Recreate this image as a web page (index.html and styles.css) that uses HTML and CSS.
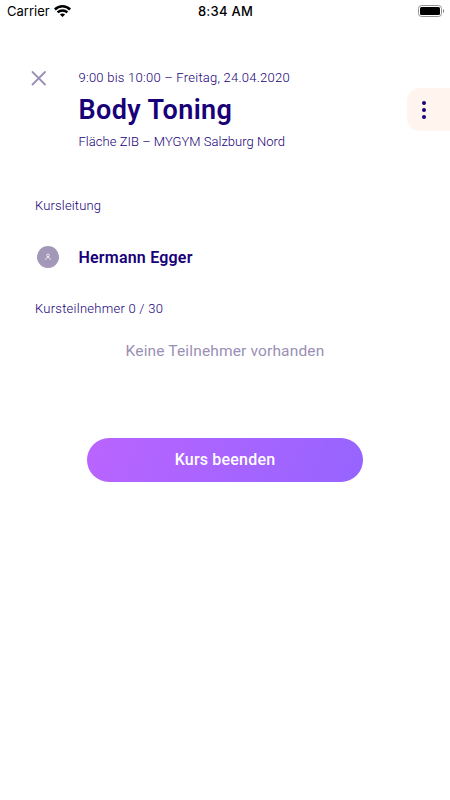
FILE: index.html
```
<!DOCTYPE html>
<html lang="de">
<head>
<meta charset="utf-8">
<title>Body Toning</title>
<link rel="stylesheet" href="styles.css">
</head>
<body>
<header class="status">
  <div class="status-left">
    <span class="carrier">Carrier</span>
    <svg class="wifi" width="17" height="12" viewBox="0 0 17 12" fill="none" stroke="#000" stroke-width="2.5"><path d="M.9 4.5C5.1.3 11.9.3 16.1 4.5"/><path d="M3.6 7.4c2.8-2.6 7-2.6 9.8 0"/><path d="M8.5 12 5.9 9.4c1.4-1.3 3.8-1.3 5.2 0z" fill="#000" stroke="none"/></svg>
  </div>
  <span class="clock">8:34 AM</span>
  <svg class="battery" width="27" height="12" viewBox="0 0 27 12"><rect x=".5" y=".5" width="23" height="11" rx="3" fill="none" stroke="#939393"/><rect x="2" y="2" width="20" height="8" rx="1.5"/><path d="M25 4v4c1.6-.6 1.6-3.4 0-4z" fill="#888"/></svg>
</header>
<main>
  <section class="course">
    <svg class="close" width="16" height="16" viewBox="0 0 16 16" fill="none" stroke="#9b8fb5" stroke-width="1.8" stroke-linecap="round"><path d="M1.5 2l12.5 12.5M14 2L1.5 14.5"/></svg>
    <div class="course-info">
      <p class="time">9:00 bis 10:00 – Freitag, 24.04.2020</p>
      <h1>Body Toning</h1>
      <p class="place">Fläche ZIB – MYGYM Salzburg Nord</p>
    </div>
    <div class="more"><i></i><i></i><i></i></div>
  </section>
  <h2 class="lead">Kursleitung</h2>
  <div class="trainer">
    <span class="avatar"><svg width="8" height="8" viewBox="0 0 8 8" fill="none" stroke="#fff" stroke-width=".8"><circle cx="4" cy="2.4" r="1.3"/><path d="M1.6 6.8c.2-3.1 4.6-3.1 4.8 0"/></svg></span>
    <span class="name">Hermann Egger</span>
  </div>
  <h2 class="count">Kursteilnehmer 0 / 30</h2>
  <p class="empty">Keine Teilnehmer vorhanden</p>
  <button class="finish">Kurs beenden</button>
</main>
</body>
</html>
```
FILE: styles.css
```
* { box-sizing: border-box; margin: 0; padding: 0; }
body { background: #fff; color: #180078; font-family: Roboto, "Liberation Sans", sans-serif; white-space: nowrap; }
svg { display: block; flex: none; }
.status { height: 22px; display: grid; grid-template-columns: 1fr auto 1fr; align-items: center; padding: 0 6px 0 7px; color: #000; font: 13px/22px Inter, sans-serif; }
.status-left { display: flex; align-items: center; gap: 4px; }
.clock { font-weight: 500; letter-spacing: .25px; }
.battery { justify-self: end; margin-right: -1px; }
.course { display: flex; align-items: flex-start; padding: 46px 0 0 31px; height: 174px; }
.close { margin-top: 2px; }
.course-info { margin-left: 31.5px; flex: 1; }
.time, .place, h2 { font-size: 13px; line-height: 20px; font-weight: 300; }
.time { letter-spacing: .24px; }
.place { letter-spacing: .03px; }
.lead { letter-spacing: .16px; }
.count { letter-spacing: .25px; }
h1 { font-size: 27px; line-height: 32px; font-weight: 600; letter-spacing: .4px; margin: 6px 0 6px; }
.more { width: 43px; height: 43px; margin-top: 20px; padding-left: 14.5px; background: #fff5ee; border-radius: 13px 0 0 13px; display: flex; flex-direction: column; justify-content: center; gap: 3px; }
.more i { width: 4px; height: 4px; border-radius: 50%; background: #180078; }
h2 { margin-left: 35px; }
.trainer { display: flex; align-items: center; height: 22px; margin: 30px 0 30.5px 37px; }
.avatar { width: 22px; height: 22px; border-radius: 50%; background: #a398b8; display: grid; place-items: center; }
.name { margin-left: 19.5px; font-size: 16px; font-weight: 600; letter-spacing: .2px; }
.empty { margin-top: 22.5px; text-align: center; font-size: 15.5px; line-height: 21px; letter-spacing: .15px; color: #9b8fb5; }
.finish { display: block; width: 276px; height: 44px; margin: 76px auto 0; border: 0; border-radius: 22px; background: linear-gradient(110deg, #ba64ff, #9664ff); color: #fff; font: 500 16px/44px Roboto, sans-serif; letter-spacing: .2px; }
```
